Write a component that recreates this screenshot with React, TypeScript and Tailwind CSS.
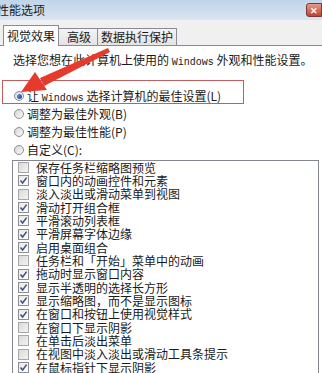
import React from "react";

const items: [string, boolean][] = [
  ["保存任务栏缩略图预览", false],
  ["窗口内的动画控件和元素", true],
  ["淡入淡出或滑动菜单到视图", false],
  ["滑动打开组合框", true],
  ["平滑滚动列表框", true],
  ["平滑屏幕字体边缘", true],
  ["启用桌面组合", true],
  ["任务栏和「开始」菜单中的动画", false],
  ["拖动时显示窗口内容", true],
  ["显示半透明的选择长方形", true],
  ["显示缩略图，而不是显示图标", true],
  ["在窗口和按钮上使用视觉样式", true],
  ["在窗口下显示阴影", false],
  ["在单击后淡出菜单", false],
  ["在视图中淡入淡出或滑动工具条提示", false],
  ["在鼠标指针下显示阴影", true],
];

function Radio({ on }: { on?: boolean }) {
  return (
    <span className="flex h-[10px] w-[10px] shrink-0 items-center justify-center rounded-full border border-[#8e8f8f] bg-gradient-to-br from-[#d6d6d6] to-[#fafafa]">
      {on && (
        <span className="h-[5px] w-[5px] rounded-full bg-gradient-to-br from-[#6a9be0] to-[#1b3f8f]" />
      )}
    </span>
  );
}

function Check({ on }: { on: boolean }) {
  return (
    <span
      className={
        on
          ? "flex h-[11px] w-[11px] shrink-0 items-center justify-center border border-[#8f8f8f] bg-gradient-to-br from-[#e8e8e8] to-white"
          : "flex h-[11px] w-[11px] shrink-0 items-center justify-center border border-[#a8a8a8] bg-gradient-to-br from-[#dadada] to-[#f3f3f3]"
      }
    >
      {on && (
        <svg width="9" height="9" viewBox="0 0 9 9">
          <path d="M1.5 4.5 L3.6 7 L7.6 1.6" fill="none" stroke="#3d4f86" strokeWidth="1.5" />
        </svg>
      )}
    </span>
  );
}

const mono = "font-['Liberation_Mono',monospace] text-[10px] leading-none";

export default function App() {
  return (
    <div className="relative h-[373px] w-[322px] overflow-hidden bg-[#f0f0f0] font-['Noto_Sans_CJK_SC',sans-serif] text-[12px] text-[#1a1a1a]">
      {/* title bar */}
      <div className="flex h-[20px] items-center justify-between bg-gradient-to-b from-[#c0d4ea] to-[#d9e5f1]">
        <span className="-ml-[3px] leading-none text-[#202020]">性能选项</span>
        <span className="flex h-[14px] w-[16px] items-center justify-center rounded-l-[3px] border border-[#7a3a33] bg-gradient-to-b from-[#e49a88] to-[#c0402e] text-[9px] font-bold leading-none text-white">
          ✕
        </span>
      </div>

      {/* tabs */}
      <div className="flex h-[25px] items-end pl-[3px]">
        <div className="relative z-10 -mb-px flex h-[21px] items-center border border-b-0 border-[#898c95] bg-white px-[3px]">
          视觉效果
        </div>
        <div className="flex h-[17px] items-center border border-b-0 border-l-0 border-[#898c95] bg-gradient-to-b from-[#f4f4f4] to-[#e3e3e3] px-[6px] pl-[8px]">
          高级
        </div>
        <div className="flex h-[17px] items-center border border-b-0 border-l-0 border-[#898c95] bg-gradient-to-b from-[#f4f4f4] to-[#e3e3e3] px-[3px]">
          数据执行保护
        </div>
      </div>

      {/* page */}
      <div className="h-[328px] border-t border-[#898c95] bg-white">
        <div className="mt-[6px] h-[16px] whitespace-nowrap pl-[13px] leading-[16px]">
          选择您想在此计算机上使用的 <span className={mono}>Windows</span> 外观和性能设置。
        </div>

        <div className="mt-[19px] flex flex-col pl-[14px]">
          <div className="flex h-[18px] items-center gap-[3px] leading-none">
            <Radio on />
            <span className="block h-[14px] whitespace-nowrap leading-[14px]">
              让 <span className={mono}>Windows</span> 选择计算机的最佳设置(L)
            </span>
          </div>
          <div className="flex h-[18px] items-center gap-[3px] leading-none">
            <Radio />
            <span>调整为最佳外观(B)</span>
          </div>
          <div className="flex h-[18px] items-center gap-[3px] leading-none">
            <Radio />
            <span>调整为最佳性能(P)</span>
          </div>
          <div className="flex h-[18px] items-center gap-[3px] leading-none">
            <Radio />
            <span>自定义(C):</span>
          </div>
        </div>

        <div className="ml-[12px] mt-[1px] h-[220px] w-[307px] border border-[#828790]">
          {items.map(([label, on]) => (
            <div key={label} className="flex h-[13.33px] items-center gap-[7px] pl-[5px] leading-none">
              <Check on={on} />
              <span className="whitespace-nowrap">{label}</span>
            </div>
          ))}
        </div>
      </div>

      {/* annotation */}
      <div className="pointer-events-none absolute left-[2px] top-[80px] h-[24px] w-[242px] border-[1.5px] border-[#c45c60]" />
      <svg className="pointer-events-none absolute left-0 top-0" width="322" height="373" viewBox="0 0 322 373">
        <polygon points="108,48 110,52 44,86 40,78" fill="#e53a2c" />
        <polygon points="21,92 35,72 47,90" fill="#e53a2c" />
      </svg>
    </div>
  );
}
